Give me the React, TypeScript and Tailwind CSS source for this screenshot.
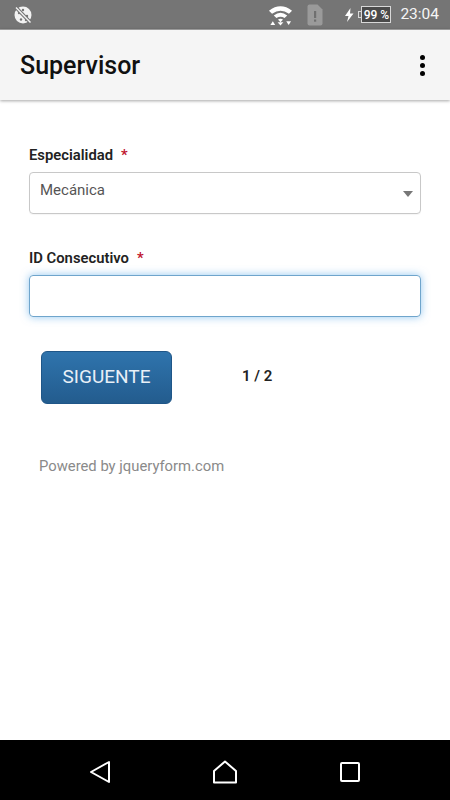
import React from 'react';

const font = { fontFamily: 'Roboto, sans-serif' };

const StatusBar: React.FC = () => (
  <div className="h-[29px] bg-[#757575] flex items-center pl-[13px] pr-[11px] text-white">
    <svg width="20" height="20" viewBox="0 0 20 20">
      <circle cx="10" cy="10" r="8.5" fill="#f2f2f2" />
      <g fill="#757575">
        <circle cx="6" cy="8" r="1.2" />
        <circle cx="10" cy="5" r="1.2" />
        <circle cx="14" cy="11" r="1.2" />
        <circle cx="8" cy="14.5" r="1.2" />
        <circle cx="13" cy="15" r="1.2" />
      </g>
      <path d="M3 2.5 L17.5 17.5" stroke="#757575" strokeWidth="3.5" />
      <path d="M3 2.5 L17.5 17.5" stroke="#f2f2f2" strokeWidth="1.4" />
    </svg>
    <div className="flex-1" />
    <svg width="25" height="22" viewBox="0 0 26 22" className="mr-[14px]">
      <path d="M1 6.5 Q13 -2.5 25 6.5 L21.8 9.8 Q13 3.5 4.2 9.8 Z" fill="#fff" />
      <path d="M6 11.4 Q13 6 20 11.4 L17.2 14.2 Q13 11.2 8.8 14.2 Z" fill="#fff" />
      <path d="M10.4 15.8 Q13 14 15.6 15.8 L13 18.6 Z" fill="#fff" />
      <path d="M2.5 21.5 L5 17.5 L7.5 21.5 Z" fill="#fff" />
      <path d="M10 18.5 L16 18.5 L13 22 Z" fill="#fff" />
      <path d="M19 17.5 L24 17.5 L21.5 21.5 Z" fill="#fff" />
    </svg>
    <svg width="16" height="22" viewBox="0 0 16 22" className="mr-[21px]">
      <path d="M2.5 0.5 H10.5 L15.5 5.5 V19.5 Q15.5 21.5 13.5 21.5 H2.5 Q0.5 21.5 0.5 19.5 V2.5 Q0.5 0.5 2.5 0.5 Z" fill="#9a9a9a" />
      <rect x="7" y="7" width="2.2" height="7" fill="#6f6f6f" />
      <rect x="7" y="15.5" width="2.2" height="2.2" fill="#6f6f6f" />
    </svg>
    <svg width="10" height="14" viewBox="0 0 10 14" className="mr-[4px]">
      <path d="M6.5 0 L1 8 H4.5 L3 14 L9.5 5.5 H6 Z" fill="#fff" />
    </svg>
    <div className="relative mr-[9px] flex items-center">
      <div className="w-[3px] h-[7px] border border-r-0 border-[#d8d8d8]" />
      <div className="w-[30px] h-[17px] border border-[#d8d8d8] bg-[#4a4a4a] flex items-center justify-center text-[12px] leading-none font-medium">
        99 %
      </div>
    </div>
    <span className="text-[15.5px] leading-none text-[#f5f5f5]">23:04</span>
  </div>
);

const AppBar: React.FC = () => (
  <div className="h-[71px] bg-[#f5f5f5] border-t border-[#9a9a9a] shadow-[0_1px_3px_rgba(0,0,0,0.35)] flex items-center justify-between pl-[20px] pr-[25px]">
    <h1 className="text-[25px] mt-[1px] font-medium text-[#111]">Supervisor</h1>
    <div className="flex flex-col gap-[3px]">
      <span className="w-[5px] h-[5px] rounded-full bg-black" />
      <span className="w-[5px] h-[5px] rounded-full bg-black" />
      <span className="w-[5px] h-[5px] rounded-full bg-black" />
    </div>
  </div>
);

const Label: React.FC<{ text: string }> = ({ text }) => (
  <div className="text-[14.8px] leading-[20px] font-semibold text-[#222]">
    {text}
    <span className="text-[#c0152f] ml-[8px]">*</span>
  </div>
);

const NavBar: React.FC = () => (
  <div className="h-[60px] bg-black flex items-center justify-between px-[89px] pt-[3px]">
    <svg width="22" height="24" viewBox="0 0 22 24">
      <path d="M20 2 V22 L2 12 Z" fill="none" stroke="#fff" strokeWidth="2" strokeLinejoin="round" />
    </svg>
    <svg width="26" height="24" viewBox="0 0 26 24">
      <path d="M2 22.5 V11 L13 1.5 L24 11 V22.5 Z" fill="none" stroke="#fff" strokeWidth="2" strokeLinejoin="round" />
    </svg>
    <svg width="22" height="22" viewBox="0 0 22 22">
      <rect x="2" y="2" width="18" height="18" rx="1" fill="none" stroke="#fff" strokeWidth="2" />
    </svg>
  </div>
);

const App: React.FC = () => {
  return (
    <div className="w-[450px] h-[800px] flex flex-col bg-white overflow-hidden" style={font}>
      <StatusBar />
      <AppBar />
      <div className="flex-1 px-[29px] pt-[45px]">
        <Label text="Especialidad" />
        <div className="mt-[7px] h-[42px] border border-[#c8c8c8] rounded-[4px] flex items-center justify-between pl-[10px] pr-[7px] text-[15px] text-[#555] shadow-[0_1px_1px_rgba(0,0,0,0.04)]">
          <span className="-mt-[6px]">Mecánica</span>
          <span className="w-0 h-0 mt-[2px] border-x-[5px] border-x-transparent border-t-[6px] border-t-[#777]" />
        </div>
        <div className="mt-[34px]">
          <Label text="ID Consecutivo" />
        </div>
        <input
          type="text"
          className="block mt-[7px] w-full h-[42px] border border-[#6fa5cc] rounded-[4px] outline-none shadow-[0_0_9px_rgba(102,175,233,0.7)]"
        />
        <div className="flex items-center mt-[34px] pl-[12px]">
          <button className="w-[131px] h-[53px] rounded-[6px] border border-[#1f5688] bg-gradient-to-b from-[#2f74ad] to-[#235c8e] text-[#e8f0f7] text-[19px]">
            SIGUENTE
          </button>
          <span className="ml-[70px] -mt-[3px] text-[15px] font-semibold text-[#222]">1 / 2</span>
        </div>
        <p className="mt-[51px] pl-[10px] text-[14.8px] text-[#8a8a8a]">Powered by jqueryform.com</p>
      </div>
      <NavBar />
    </div>
  );
};

export default App;
